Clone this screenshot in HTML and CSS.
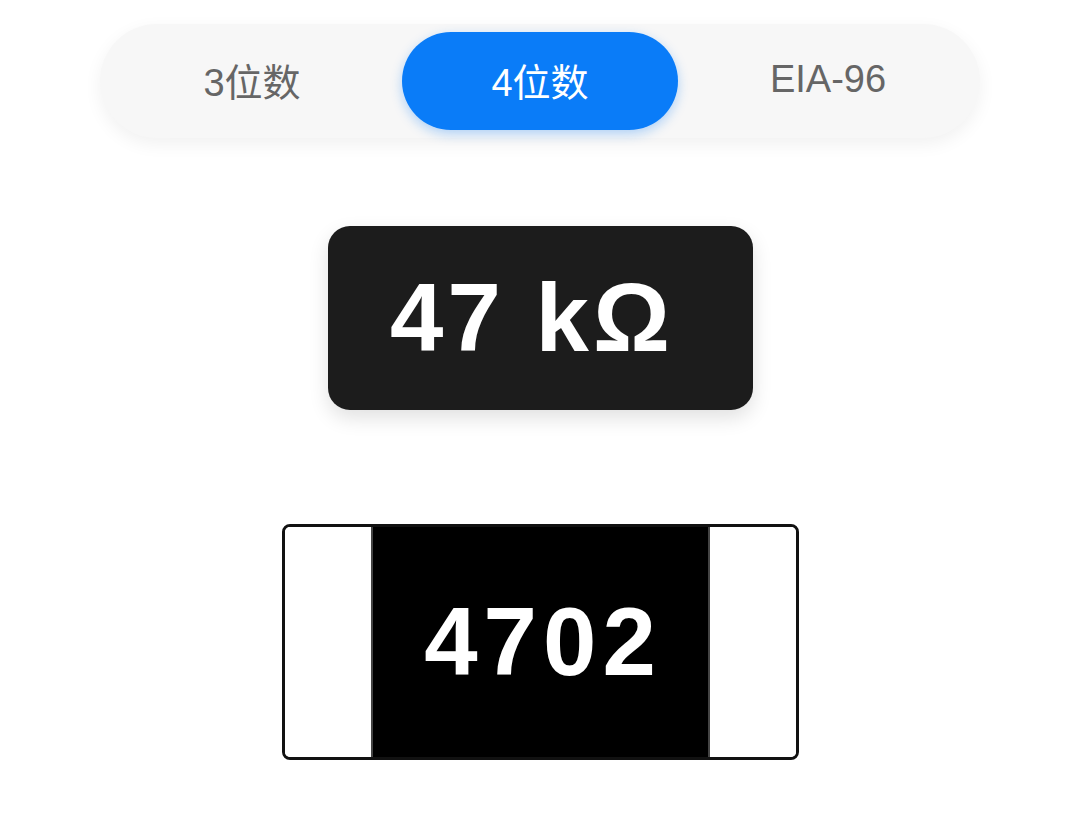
FILE: index.html
```html
<!DOCTYPE html>
<html lang="zh-CN">
<head>
    <meta charset="UTF-8">
    <meta name="viewport" content="width=device-width, initial-scale=1.0">
    <title>贴片电阻代码</title>
    <link rel="stylesheet" href="styles.css">
</head>
<body>

<div class="page">
    <div class="tabs">
        <div class="tab">3位数</div>
        <div class="tab active">4位数</div>
        <div class="tab">EIA-96</div>
    </div>

    <div class="value-card">47 kΩ</div>

    <div class="resistor">
        <div class="cap"></div>
        <div class="body">4702</div>
        <div class="cap"></div>
    </div>
</div>

</body>
</html>
```

FILE: styles.css
```css
body {
    margin: 0;
    padding: 0;
    background-color: #fff;
    font-family: "Liberation Sans", "Noto Sans CJK SC", sans-serif;
}
.page {
    display: flex;
    flex-direction: column;
    align-items: center;
}
.tabs {
    margin-top: 24px;
    width: 864px;
    padding: 8px;
    display: grid;
    grid-template-columns: repeat(3, 1fr);
    background-color: #f7f7f7;
    border-radius: 57px;
    box-shadow: 0 6px 18px rgba(0, 0, 0, 0.06);
}
.tab {
    height: 94px;
    padding-bottom: 4px;
    margin: 0 6px;
    display: flex;
    justify-content: center;
    align-items: center;
    font-size: 38px;
    color: #666;
    border-radius: 49px;
}
.tab.active {
    background-color: #0a7cf8;
    color: #fff;
    box-shadow: 0 4px 12px rgba(10, 124, 248, 0.3);
}
.value-card {
    margin-top: 88px;
    width: 409px;
    height: 184px;
    padding-right: 16px;
    display: flex;
    justify-content: center;
    align-items: center;
    background-color: #1c1c1c;
    border-radius: 22px;
    box-shadow: 0 8px 20px rgba(0, 0, 0, 0.12);
    color: #fff;
    font-size: 96px;
    font-weight: bold;
    letter-spacing: 4px;
}
.resistor {
    margin-top: 114px;
    width: 511px;
    height: 230px;
    display: flex;
    border: 3px solid #111;
    border-radius: 8px;
    overflow: hidden;
}
.cap {
    flex: 0 0 86px;
    background-color: #fff;
}
.body {
    flex: 1;
    display: flex;
    justify-content: center;
    align-items: center;
    background-color: #000;
    border-left: 2px solid #444;
    border-right: 2px solid #444;
    color: #fff;
    font-size: 96px;
    font-weight: bold;
    letter-spacing: 6px;
    padding-left: 6px;
}
```
